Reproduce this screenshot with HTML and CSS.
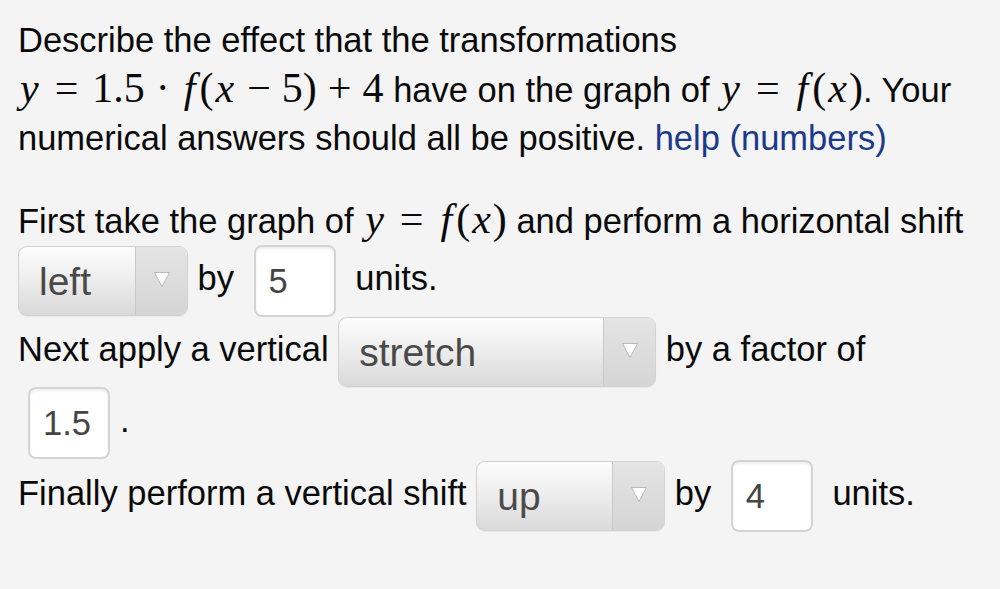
FILE: index.html
```html
<!DOCTYPE html>
<html lang="en">
<head>
<meta charset="utf-8">
<title>Transformations</title>
<link rel="stylesheet" href="styles.css">
</head>
<body>
<div class="problem">
  <p class="intro">Describe the effect that the transformations <span class="m"><i>y</i><span class="rel">=</span>1.5<span class="bin">·</span><i class="fn">f</i>(<i>x</i><span class="bin">−</span>5)<span class="bin">+</span>4</span> have on the graph of <span class="m"><i>y</i><span class="rel">=</span><i class="fn">f</i>(<i>x</i>)</span>. Your numerical answers should all be positive. <a class="help" href="#">help (numbers)</a></p>

  <div class="steps">
    <div class="line">First take the graph of <span class="m"><i>y</i><span class="rel">=</span><i class="fn">f</i>(<i>x</i>)</span> and perform a horizontal shift</div>
    <div class="line ctl">
      <span class="sel w-left"><span class="sel-label">left</span><span class="sel-arrow"><svg width="18" height="17" viewBox="0 0 18 17"><polygon points="1.5,1.5 16.5,1.5 9,15.5" fill="#fff" stroke="#b8b8b8" stroke-width="1"/></svg></span></span> by <input class="inp" type="text" value="5"> units.
    </div>
    <div class="line ctl">
      Next apply a vertical <span class="sel w-stretch"><span class="sel-label">stretch</span><span class="sel-arrow"><svg width="18" height="17" viewBox="0 0 18 17"><polygon points="1.5,1.5 16.5,1.5 9,15.5" fill="#fff" stroke="#b8b8b8" stroke-width="1"/></svg></span></span> by a factor of
    </div>
    <div class="line ctl">
      <input class="inp" type="text" value="1.5">.
    </div>
    <div class="line ctl last">
      Finally perform a vertical shift <span class="sel w-up"><span class="sel-label">up</span><span class="sel-arrow"><svg width="18" height="17" viewBox="0 0 18 17"><polygon points="1.5,1.5 16.5,1.5 9,15.5" fill="#fff" stroke="#b8b8b8" stroke-width="1"/></svg></span></span> by <input class="inp" type="text" value="4"> units.
    </div>
  </div>
</div>
</body>
</html>
```

FILE: styles.css
```css
html, body {
  margin: 0;
  padding: 0;
  background: #f4f4f4;
}

body {
  font-family: "Liberation Sans", Arial, Helvetica, sans-serif;
  font-size: 34.5px;
  line-height: 48px;
  color: #0a0a0a;
}

.problem {
  padding: 16px 4px 0 18px;
}

.intro {
  margin: 0 0 33px 0;
}

.help {
  color: #1c3a8c;
  text-decoration: none;
}

.m {
  font-family: "Liberation Serif", "Times New Roman", serif;
  font-size: 42px;
  white-space: nowrap;
}

.m i {
  font-style: italic;
  padding: 0 2px;
}

.m i.fn {
  padding: 0 4px 0 3px;
}

.rel {
  padding: 0 14px;
}

.bin {
  padding: 0 11px;
}

.line {
  white-space: nowrap;
}

.last {
  padding-top: 1px;
}

.sel {
  display: inline-flex;
  vertical-align: middle;
  box-sizing: border-box;
  height: 70px;
  border: 1px solid #d2d2d2;
  border-radius: 9px;
  background: linear-gradient(to bottom, #fdfdfd 0%, #ececec 50%, #d9d9d9 100%);
  overflow: hidden;
  box-shadow: 0 1px 1px rgba(0, 0, 0, 0.05);
  color: #4a4a4a;
  font-size: 39px;
}

.w-left { width: 170px; }
.w-stretch { width: 318px; }
.w-up { width: 189px; }

.sel-label {
  flex: 1;
  padding-left: 20px;
  line-height: 70px;
}

.sel-arrow {
  width: 51px;
  border-left: 1px solid #c9c9c9;
  background: linear-gradient(to bottom, #e4e4e4, #d5d5d5);
  display: flex;
  align-items: center;
  justify-content: center;
}

.sel-arrow svg {
  display: block;
  margin-top: -3px;
}

.inp {
  vertical-align: middle;
  box-sizing: border-box;
  width: 82px;
  height: 72px;
  margin: 0 10px;
  padding: 0 0 0 13px;
  border: 2px solid #d4d4d4;
  border-radius: 8px;
  background: #fff;
  box-shadow: inset 0 2px 3px rgba(0, 0, 0, 0.07);
  font-family: "Liberation Sans", Arial, Helvetica, sans-serif;
  font-size: 34.5px;
  color: #454545;
  outline: none;
}
```
